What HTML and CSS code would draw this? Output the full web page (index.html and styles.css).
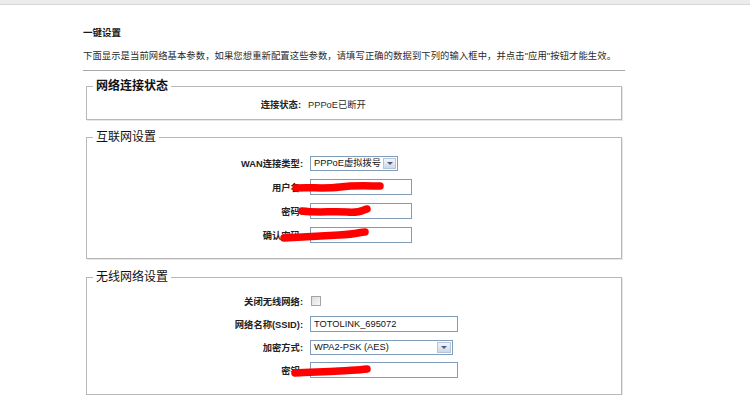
FILE: index.html
```html
<!DOCTYPE html>
<html lang="zh-CN">
<head>
<meta charset="utf-8">
<title>一键设置</title>
<link rel="stylesheet" href="styles.css">
</head>
<body>
<div class="topbar"></div>
<div class="main">
  <div class="title">一键设置</div>
  <div class="desc">下面显示是当前网络基本参数，如果您想重新配置这些参数，请填写正确的数据到下列的输入框中，并点击"应用"按钮才能生效。</div>
  <div class="rule"></div>

  <fieldset class="box box-status">
    <legend class="legend legend-bold">网络连接状态</legend>
    <div class="rows rows-status">
      <div class="row row-text">
        <span class="label">连接状态:</span>
        <span class="value">PPPoE已断开</span>
      </div>
    </div>
  </fieldset>

  <fieldset class="box box-wan">
    <legend class="legend">互联网设置</legend>
    <div class="rows rows-wan">
      <div class="row">
        <span class="label">WAN连接类型:</span>
        <div class="sel sel-wan"><span class="sel-text">PPPoE虚拟拨号</span><span class="sel-btn"><span class="tri"></span></span></div>
      </div>
      <div class="row">
        <span class="label">用户名:</span>
        <div class="input input-short"></div>
        <svg class="scribble" width="100" height="16" viewBox="0 0 100 16" style="left:203px;top:0"><path d="M6 9 C 20 8, 35 10, 50 8 S 80 7, 90 7" /></svg>
      </div>
      <div class="row">
        <span class="label">密码:</span>
        <div class="input input-short"></div>
        <svg class="scribble" width="80" height="16" viewBox="0 0 80 16" style="left:210px;top:0"><path d="M5 8 C 20 10, 35 8, 50 9 S 65 7, 70 6" /></svg>
      </div>
      <div class="row">
        <span class="label">确认密码:</span>
        <div class="input input-short"></div>
        <svg class="scribble" width="95" height="16" viewBox="0 0 95 16" style="left:192px;top:0"><path d="M5 11 C 25 10, 40 9, 60 8 S 80 5, 86 5" /></svg>
      </div>
    </div>
  </fieldset>

  <fieldset class="box box-wlan">
    <legend class="legend">无线网络设置</legend>
    <div class="rows rows-wlan">
      <div class="row">
        <span class="label">关闭无线网络:</span>
        <span class="check"></span>
      </div>
      <div class="row">
        <span class="label">网络名称(SSID):</span>
        <div class="input input-long">TOTOLINK_695072</div>
      </div>
      <div class="row">
        <span class="label">加密方式:</span>
        <div class="sel sel-enc"><span class="sel-text">WPA2-PSK (AES)</span><span class="sel-btn sel-btn-wide"><span class="tri"></span></span></div>
      </div>
      <div class="row">
        <span class="label">密钥:</span>
        <div class="input input-long"></div>
        <svg class="scribble" width="85" height="16" viewBox="0 0 85 16" style="left:202px;top:0"><path d="M6 11 C 20 10, 35 10, 50 9 S 70 8, 78 7" /></svg>
      </div>
    </div>
  </fieldset>
</div>
</body>
</html>
```

FILE: styles.css
```css
html, body {
  margin: 0;
  padding: 0;
  background: #ffffff;
}

body {
  font-family: "Liberation Sans", "Noto Sans CJK SC", sans-serif;
  font-size: 9.3px;
  color: #2a2a2a;
}

.topbar {
  height: 4px;
  background: #ececec;
  border-bottom: 1px solid #d6d6d6;
}

.main {
  width: 542px;
  margin-left: 83px;
}

.title {
  margin-top: 22px;
  line-height: 12px;
  font-size: 9.5px;
  font-weight: bold;
  color: #1a1a1a;
}

.desc {
  margin-top: 11px;
  line-height: 12px;
  color: #2a2a2a;
  white-space: nowrap;
  letter-spacing: 0.1px;
}

.rule {
  margin-top: 8px;
  height: 0;
  border-top: 1px solid #a8a8a8;
}

.box {
  margin: 0 3px;
  padding: 0;
  border: 1px solid #b8b8b8;
  box-shadow: 1px 1px 0 #e6e6e6;
  min-width: 0;
}

.box-status { margin-top: 8px; }
.box-wan { margin-top: 10px; }
.box-wlan { margin-top: 11px; }

.legend {
  margin-left: 6px;
  padding: 0 3px;
  font-size: 12px;
  line-height: 14px;
  height: 14px;
  color: #111111;
}

.legend-bold {
  font-weight: bold;
}

.rows {
  display: flex;
  flex-direction: column;
}

.rows-status { padding: 4px 0 10px; }
.rows-wan { padding: 11px 0 15px; gap: 8px; }
.rows-wlan { padding: 9px 0 16px; gap: 7px; }

.row {
  position: relative;
  display: grid;
  grid-template-columns: 216px auto;
  column-gap: 7px;
  align-items: center;
  justify-items: start;
  height: 16px;
}

.row-text {
  height: 12px;
  grid-template-columns: 214px auto;
}

.label {
  justify-self: end;
  font-weight: bold;
  color: #222222;
  white-space: nowrap;
}

.value {
  color: #2a2a2a;
}

.input {
  box-sizing: border-box;
  height: 16px;
  border: 1px solid #7f9db9;
  background: #ffffff;
  padding: 0 3px;
  line-height: 14px;
  color: #111111;
  font-size: 9.3px;
}

.input-short { width: 102px; }
.input-long { width: 148px; }

.sel {
  box-sizing: border-box;
  display: flex;
  align-items: center;
  height: 15px;
  border: 1px solid #7f9db9;
  background: #ffffff;
  color: #111111;
}

.sel-wan { width: 88px; }
.sel-enc { width: 143px; }

.sel-text {
  padding-left: 3px;
  line-height: 13px;
  white-space: nowrap;
}

.sel-btn {
  box-sizing: border-box;
  margin-left: auto;
  margin-right: 1px;
  width: 13px;
  height: 11px;
  border: 1px solid #b6c3d8;
  background: linear-gradient(#f3f5f9, #cfd8e6);
  display: flex;
  align-items: center;
  justify-content: center;
}

.sel-btn-wide {
  width: 14px;
}

.tri {
  width: 0;
  height: 0;
  border-left: 3px solid transparent;
  border-right: 3px solid transparent;
  border-top: 3px solid #4a5d80;
  margin-top: 1px;
}

.check {
  box-sizing: border-box;
  display: block;
  width: 10px;
  height: 10px;
  margin-left: 1px;
  border: 1px solid #a4a4a4;
  background: linear-gradient(135deg, #dcdcdc, #f8f8f8);
}

.scribble {
  position: absolute;
  overflow: visible;
}

.scribble path {
  fill: none;
  stroke: #ff0000;
  stroke-width: 7.5;
  stroke-linecap: round;
}
```
